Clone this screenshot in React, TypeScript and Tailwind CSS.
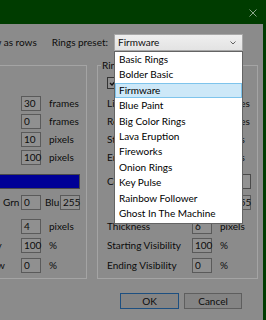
import React from "react";

type Row = { label: string; value: string; unit: string };

const presets = [
  "Basic Rings",
  "Bolder Basic",
  "Firmware",
  "Blue Paint",
  "Big Color Rings",
  "Lava Eruption",
  "Fireworks",
  "Onion Rings",
  "Key Pulse",
  "Rainbow Follower",
  "Ghost In The Machine",
];

function Box({ value, w = "w-[20px]" }: { value: string; w?: string }) {
  return (
    <div className={`${w} h-[15px] flex-none border border-[#5a5a5a] bg-[#909090] pl-[2px] leading-[13px]`}>
      {value}
    </div>
  );
}

function GroupBox({
  title,
  rows,
  swatch,
  rgb,
  thickness,
  visibility,
}: {
  title: string;
  rows: Row[];
  swatch: string;
  rgb: [string, string, string];
  thickness: Row;
  visibility: [Row, Row];
}) {
  const line = (r: Row, mt: string) => (
    <div className={`${mt} flex items-center h-[15px]`}>
      <span className="w-[85px] flex-none whitespace-nowrap">{r.label}</span>
      <Box value={r.value} />
      <span className="ml-[8px] whitespace-nowrap">{r.unit}</span>
    </div>
  );

  return (
    <div className="w-[161px] h-[214px] flex-none border border-[#a4a4a4] pl-[9px] flex flex-col">
      <div className="-mt-[7px] -ml-[6px] h-[13px] leading-[13px] px-[1px] w-fit bg-[#8b8b8b] whitespace-nowrap">
        {title}
      </div>
      <div className="mt-[5px] flex items-center h-[12px]">
        <div className="w-[12px] h-[12px] border border-[#333] bg-[#8e8e8e] flex items-center justify-center">
          <svg width="8" height="8" viewBox="0 0 8 8">
            <path d="M1 4 L3 6 L7 1.5" stroke="#111" strokeWidth="1.4" fill="none" />
          </svg>
        </div>
        <span className="ml-[5px] whitespace-nowrap">Enabled</span>
      </div>
      {line(rows[0], "mt-[7px]")}
      {line(rows[1], "mt-[3px]")}
      {line(rows[2], "mt-[3px]")}
      {line(rows[3], "mt-[3px]")}
      <div className="mt-[9px] flex items-center h-[15px]">
        <span className="w-[25px] flex-none">Color</span>
        <div className={`w-[119px] h-[15px] border border-[#4a4a4a] ${swatch}`} />
      </div>
      <div className="mt-[6px] flex items-center h-[15px]">
        <span className="ml-[25px] w-[18px] flex-none">Red</span>
        <Box value={rgb[0]} />
        <span className="ml-[4px] w-[18px] flex-none">Grn</span>
        <Box value={rgb[1]} />
        <span className="ml-[4px] w-[15px] flex-none">Blu</span>
        <Box value={rgb[2]} />
      </div>
      {line(thickness, "mt-[9px]")}
      {line(visibility[0], "mt-[4px]")}
      {line(visibility[1], "mt-[5px]")}
    </div>
  );
}

export default function App() {
  return (
    <div className="w-[266px] h-[320px] overflow-hidden bg-[#003c00] font-['Lato',sans-serif] text-[10px] text-[#0c0c0c] relative">
      <div className="h-[24px] flex items-start justify-end pr-[9px] pt-[9px]">
        <svg width="8" height="8" viewBox="0 0 8 8">
          <path d="M0.5 0.5 L7.5 7.5 M7.5 0.5 L0.5 7.5" stroke="#8aa58a" strokeWidth="1" />
        </svg>
      </div>
      <div className="mr-[3px] h-[296px] bg-[#8b8b8b] overflow-hidden flex flex-col">
        <div className="pt-[10px] pr-[20px] flex justify-end items-center">
          <span className="flex-none whitespace-nowrap">Show as rows</span>
          <span className="flex-none ml-[15px] whitespace-nowrap">Rings preset:</span>
          <div className="flex-none ml-[6px] w-[129px] h-[17px] border border-[#a8a8a8] bg-gradient-to-b from-[#efefef] to-[#e3e3e3] flex items-center pl-[3px] pr-[6px]">
            <span className="flex-1">Firmware</span>
            <svg width="6" height="4" viewBox="0 0 6 4">
              <path d="M0.5 0.5 L3 3 L5.5 0.5" stroke="#606060" strokeWidth="1" fill="none" />
            </svg>
          </div>
        </div>
        <div className="mt-[14px] -ml-[74px] flex gap-[10px]">
          <GroupBox
            title="Ripple Settings"
            rows={[
              { label: "Lifetime", value: "30", unit: "frames" },
              { label: "Delay", value: "0", unit: "frames" },
              { label: "Start Size", value: "10", unit: "pixels" },
              { label: "End Size", value: "100", unit: "pixels" },
            ]}
            swatch="bg-[#000096]"
            rgb={["0", "0", "255"]}
            thickness={{ label: "Thickness", value: "4", unit: "pixels" }}
            visibility={[
              { label: "Fading Opacity", value: "100", unit: "%" },
              { label: "Trailing Shadow", value: "0", unit: "%" },
            ]}
          />
          <GroupBox
            title="Rings"
            rows={[
              { label: "Lifetime", value: "30", unit: "frames" },
              { label: "Repeat", value: "0", unit: "frames" },
              { label: "Start Size", value: "10", unit: "pixels" },
              { label: "End Size", value: "80", unit: "pixels" },
            ]}
            swatch="bg-[#929292]"
            rgb={["255", "255", "255"]}
            thickness={{ label: "Thickness", value: "6", unit: "pixels" }}
            visibility={[
              { label: "Starting Visibility", value: "100", unit: "%" },
              { label: "Ending Visibility", value: "0", unit: "%" },
            ]}
          />
        </div>
        <div className="mt-[14px] pr-[21px] flex justify-end gap-[5px]">
          <button className="w-[59px] h-[16px] border border-[#1d4f80] bg-[#848484] leading-[14px]">OK</button>
          <button className="w-[58px] h-[16px] border border-[#5e5e5e] bg-[#848484] leading-[14px]">Cancel</button>
        </div>
      </div>
      <div className="absolute left-[114px] top-[51px] w-[129px] h-[173px] border border-[#646464] bg-white text-black pb-[1px]">
        {presets.map((p) => (
          <div
            key={p}
            className={`h-[15.4px] leading-[13.4px] pl-[3px] border whitespace-nowrap ${
              p === "Firmware" ? "bg-[#cde8f8] border-[#7ec4ec]" : "border-transparent"
            }`}
          >
            {p}
          </div>
        ))}
      </div>
    </div>
  );
}
